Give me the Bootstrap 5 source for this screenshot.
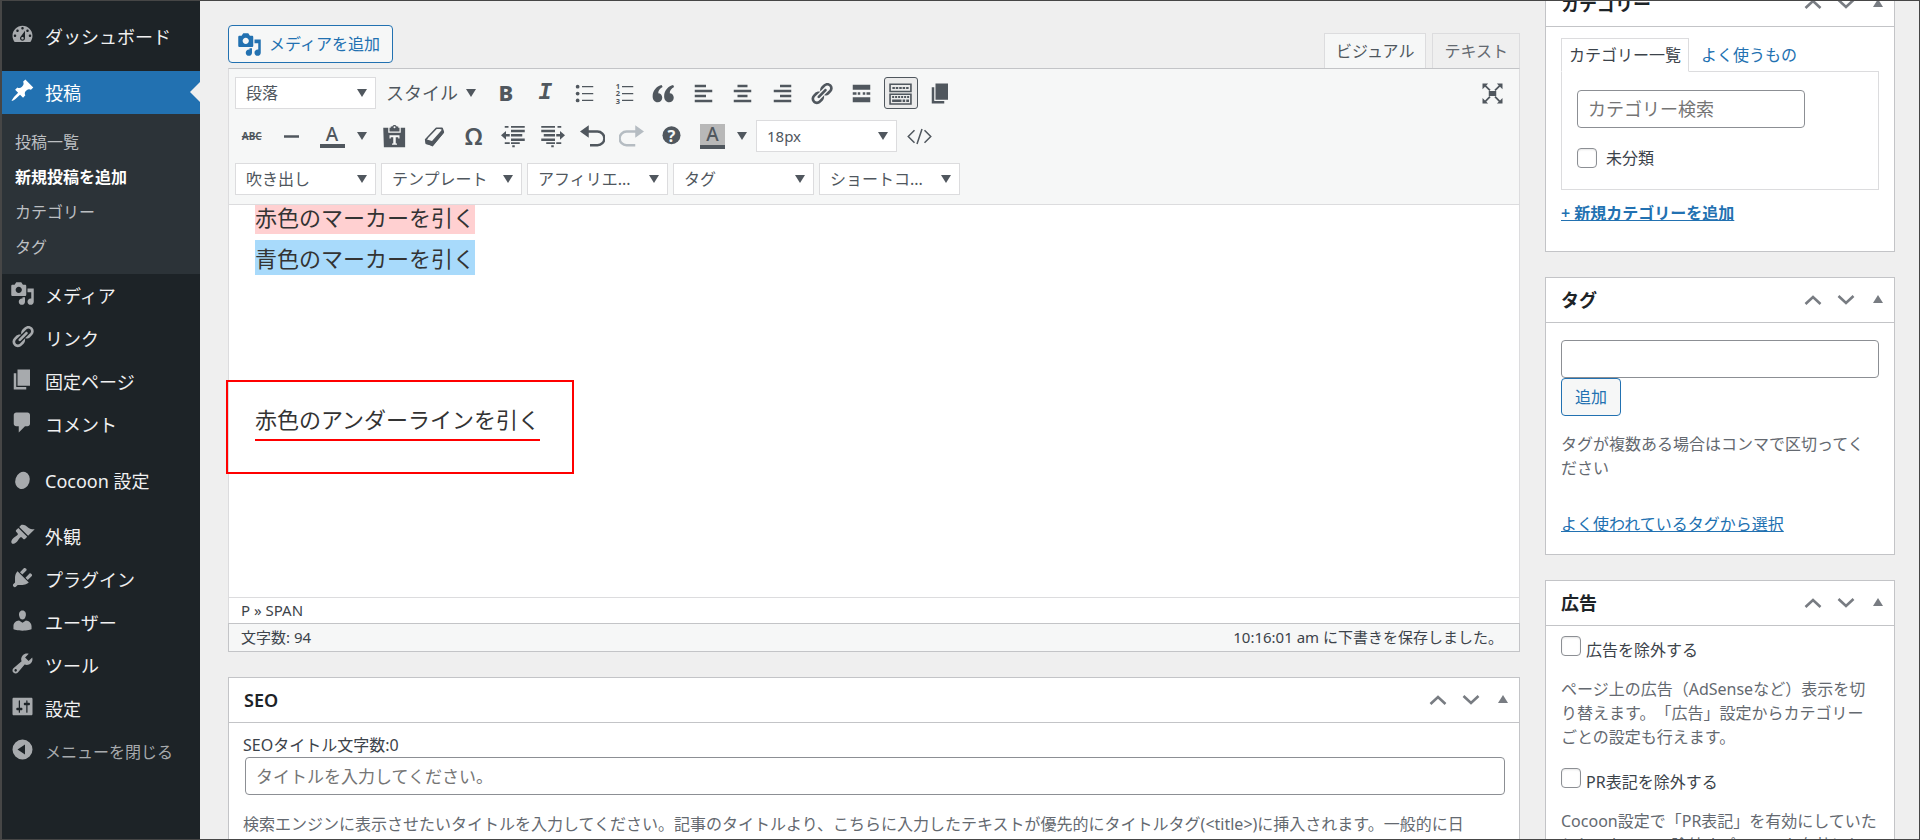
<!DOCTYPE html>
<html lang="ja">
<head>
<meta charset="utf-8">
<meta name="viewport" content="width=device-width, initial-scale=1">
<title>新規投稿を追加</title>
<link href="https://cdn.jsdelivr.net/npm/bootstrap@5.3.0/dist/css/bootstrap.min.css" rel="stylesheet">
<style>
:root{--ink:#3c434a;--muted:#646970;--blue:#2271b1;--line:#c3c4c7;--soft:#dcdcde;--pale:#f6f7f7;--icon:#50575e}
body{height:100vh;overflow:hidden;background:#efefef;color:var(--ink);font:16px/24px "Noto Sans","Noto Sans CJK JP",sans-serif;text-spacing-trim:space-all;border:solid #464646;border-width:1px 1px 1px 2px}
a{color:var(--blue)}
svg{display:block;fill:currentColor;flex:none}
button{color:inherit}

/* admin menu */
.side-menu{width:198px;background:#1d2327;color:#f0f0f1;font-size:18px;padding-top:14px}
.side-menu .entry{display:flex;align-items:center;gap:10px;height:43px;padding-left:8px;color:#f0f0f1;text-decoration:none;white-space:nowrap}
.side-menu .entry svg{width:25px;height:25px;margin-bottom:4px;color:#a7aaad}
.side-menu .gap-above{margin-top:13px}
.side-menu .entry.current{background:var(--blue);color:#fff;position:relative}
.side-menu .entry.current svg{color:#fff}
.side-menu .entry.current::after{content:"";position:absolute;right:0;top:11px;border:10px solid transparent;border-left:0;border-right-color:#efefef}
.sub-menu{background:#2c3338;font-size:16px;padding:10px 0 10px 13px}
.sub-menu a{display:flex;align-items:center;height:35px;color:#bcbfc2;text-decoration:none}
.sub-menu a.here{color:#fff;font-weight:600}
.side-menu .fold{background:none;border:0;color:#a7aaad;font-size:16px;width:100%}

/* editor */
.work{padding:0 24px 0 28px;gap:25px}
.btn-wp{border:1px solid var(--blue);border-radius:4px;background:var(--pale);color:var(--blue);font-size:16px;line-height:24px;height:38px;padding:0 13px}
.btn-media{gap:7px;padding:0 12px 0 8px;margin-bottom:5px}
.ed-tab{border:1px solid var(--soft);border-bottom:0;background:#efefef;color:var(--muted);height:35px;padding:0 11px;font-size:16px}
.ed-tab.on{background:var(--pale);color:var(--icon)}
.editor{border:1px solid var(--soft);border-top-color:var(--line);background:#fff}
.tools{background:var(--pale);border-bottom:1px solid var(--soft);padding:8px 6px 9px;color:var(--icon)}
.tools select{appearance:none;width:141px;height:32px;border:1px solid var(--soft);border-radius:0;background:#fff url("data:image/svg+xml,%3Csvg xmlns='http://www.w3.org/2000/svg' width='10' height='8'%3E%3Cpath d='M0 0h10L5 8z' fill='%2350575e'/%3E%3C/svg%3E") no-repeat right 8px center;color:var(--icon);font-size:16px;line-height:24px;padding:0 0 0 10px}
.tools select.short-label{font-size:15px}
.tools button{background:none;border:0;padding:0;display:flex;align-items:center;justify-content:center;height:32px}
.tools button svg{width:25px;height:25px}
.tools .styles{width:110px;gap:8px;font-size:18px}
.strip{display:grid;grid-auto-flow:column;grid-auto-columns:1fr;justify-items:center}
.strip button{width:34px}
.strip button.on{border:1px solid var(--icon);border-radius:3px;background:#ebebeb}
.caret{width:0;border:5px solid transparent;border-top:8px solid;border-bottom:0}
.w-pair{width:79px;margin-left:-3px}.w-eight{width:316px}.w-twelve{width:474px}
.swatch{font-size:19px;line-height:20px;width:25px;text-align:center;border-bottom:4px solid;font-weight:500}
.swatch.filled{background:#b8b8b8;line-height:21px}
.glyph-b{font-size:22px;font-weight:800;line-height:28px;padding-bottom:2px}
.glyph-i{font:italic 700 23px "Liberation Mono",monospace}
.glyph-abc{font-size:10px;font-weight:700;text-decoration:line-through}
.glyph-omega{font-size:24px;font-weight:600}
.canvas{height:392px;clip-path:inset(0 -8px);padding:0 26px;color:#333;font-size:22px;line-height:41px}
.canvas .lines{display:flow-root}
.canvas .first-line{margin-top:-8px}
.hl{padding:3px 0 2px}
.hl-red{background:#ffd0d1}.hl-blue{background:#a8dafb}
.ul-red{border-bottom:2px solid red;padding-bottom:5px}
.callout-line{margin-top:120px;position:relative}
.callout-line::after{content:"";position:absolute;left:-29px;top:-19px;width:348px;height:94px;border:2px solid red}
.path-row{border-top:1px solid var(--soft);height:26px;font-size:15px;line-height:25px;padding:0 12px}
.status-row{background:var(--pale);border:1px solid var(--line);margin:0 -1px -1px;font-size:15px;line-height:27px;padding:0 16px 0 12px}

/* panels */
.panel{background:#fff;border:1px solid var(--line)}
.panel-head{height:45px;border-bottom:1px solid var(--line);padding:0 11px 0 15px;color:#1d2327}
.panel-head h2{font-size:18px;line-height:24px;font-weight:600;margin:0}
.panel-head button{background:none;border:0;padding:0;color:#787c82}
.panel-head .move-down{margin:0 18px 0 15px}
.field{border:1px solid #8c8f94;border-radius:4px;height:38px;padding:0 10px;font-size:17px;background:#fff;color:var(--ink)}
.field::placeholder{color:#757575;opacity:1}
.hint{color:var(--muted);margin:0}
.tick{appearance:none;width:20px;height:20px;border:1px solid #8c8f94;border-radius:4px;background:#fff;box-shadow:inset 0 1px 2px rgba(0,0,0,.1);margin:0;flex:none}
.right-col{width:350px;margin-top:-20px;gap:25px}
.cat-tab{border:1px solid var(--soft);border-bottom-color:#fff;padding:0 7px;line-height:32px;margin-bottom:-1px;background:#fff}
.cat-box{border:1px solid var(--soft);padding:18px 15px 19px}
.cat-search{width:228px;font-size:18px}
.opt{gap:5px}
.opt span{padding-top:2px}
.opt + .hint{margin:15px 0 19px}
.seo-hint{padding:17px 32px 0 0}
</style>
</head>
<body class="d-flex">
<svg width="0" height="0" class="position-absolute" aria-hidden="true">
  <symbol id="media" viewBox="0 0 20 20"><path d="M13 11V4c0-.55-.45-1-1-1h-1.67L9 1H5L3.67 3H2c-.55 0-1 .45-1 1v7c0 .55.45 1 1 1h10c.55 0 1-.45 1-1zM7 4.5c1.38 0 2.5 1.12 2.5 2.5S8.38 9.5 7 9.5 4.5 8.38 4.5 7 5.62 4.5 7 4.5zM14 6h5v10.5c0 1.38-1.12 2.5-2.5 2.5S14 17.88 14 16.5s1.12-2.5 2.5-2.5c.17 0 .34.02.5.05V9h-3V6zm-4 8.05V13h2v3.5c0 1.38-1.12 2.5-2.5 2.5S7 17.88 7 16.5 8.12 14 9.5 14c.17 0 .34.02.5.05z"/></symbol>
  <symbol id="chain" viewBox="0 0 20 20"><path d="M17.74 2.76c1.68 1.69 1.68 4.41 0 6.1l-1.53 1.52c-1.12 1.12-2.7 1.47-4.14 1.09l2.62-2.61.76-.77.76-.76c.84-.84.84-2.2 0-3.04-.84-.85-2.2-.85-3.04 0l-.77.76-3.38 3.38c-.37-1.44-.02-3.02 1.1-4.14l1.52-1.53c1.69-1.68 4.42-1.68 6.1 0zM8.59 13.43l5.34-5.34c.42-.42.42-1.1 0-1.52-.44-.43-1.13-.39-1.53 0l-5.33 5.34c-.42.42-.42 1.1 0 1.52.44.43 1.13.39 1.52 0zm-.76 2.29l4.14-4.15c.38 1.44.03 3.02-1.09 4.14l-1.52 1.53c-1.69 1.68-4.41 1.68-6.1 0-1.68-1.68-1.68-4.42 0-6.1l1.53-1.52c1.12-1.12 2.7-1.47 4.14-1.1l-4.14 4.15c-.85.84-.85 2.2 0 3.05.84.84 2.2.84 3.04 0z"/></symbol>
  <symbol id="pages" viewBox="0 0 20 20"><path d="M6 15V2h10v13H6zm-1 1h8v2H3V5h2v11z"/></symbol>
  <symbol id="up" viewBox="0 0 18 12"><path d="M1.500 10 9 3l7.500 7" fill="none" stroke="currentColor" stroke-width="2.600"/></symbol>
  <symbol id="down" viewBox="0 0 18 12"><path d="M1.500 2 9 9l7.500-7" fill="none" stroke="currentColor" stroke-width="2.600"/></symbol>
  <symbol id="tri" viewBox="0 0 10 10"><path d="M0 8h10L5 0z"/></symbol>
</svg>

<nav class="side-menu flex-shrink-0" aria-label="管理メニュー">
  <a class="entry" href="#"><svg viewBox="0 0 20 20"><path d="M3.76 16h12.480c1.100-1.370 1.760-3.110 1.760-5 0-4.420-3.580-8-8-8s-8 3.580-8 8c0 1.890.66 3.630 1.760 5zM10 4c.55 0 1 .45 1 1s-.45 1-1 1-1-.45-1-1 .45-1 1-1zM6 6c.55 0 1 .45 1 1s-.45 1-1 1-1-.45-1-1 .45-1 1-1zm8 0c.55 0 1 .45 1 1s-.45 1-1 1-1-.45-1-1 .45-1 1-1zm-5.370 5.550L12 7v6c0 1.100-.9 2-2 2s-2-.9-2-2c0-.57.24-1.080.63-1.450zM4 10c.55 0 1 .45 1 1s-.45 1-1 1-1-.45-1-1 .45-1 1-1zm12 0c.55 0 1 .45 1 1s-.45 1-1 1-1-.45-1-1 .45-1 1-1zm-5 3c0-.55-.45-1-1-1s-1 .45-1 1 .45 1 1 1 1-.45 1-1z"/></svg>ダッシュボード</a>
  <a class="entry current gap-above" href="#"><svg viewBox="0 0 20 20"><path d="M10.440 3.020l1.820-1.820 6.360 6.350-1.830 1.820c-1.050-.68-2.480-.57-3.410.36l-.75.75c-.92.93-1.040 2.350-.35 3.410l-1.830 1.820-2.410-2.410-2.800 2.790c-.42.42-3.380 2.710-3.800 2.290s1.860-3.390 2.280-3.810l2.790-2.790L4.100 9.360l1.830-1.820c1.050.69 2.480.57 3.400-.36l.75-.75c.93-.92 1.050-2.350.36-3.410z"/></svg>投稿</a>
  <div class="sub-menu">
    <a href="#">投稿一覧</a><a href="#" class="here">新規投稿を追加</a><a href="#">カテゴリー</a><a href="#">タグ</a>
  </div>
  <a class="entry" href="#"><svg><use href="#media"/></svg>メディア</a>
  <a class="entry" href="#"><svg><use href="#chain"/></svg>リンク</a>
  <a class="entry" href="#"><svg><use href="#pages"/></svg>固定ページ</a>
  <a class="entry" href="#"><svg viewBox="0 0 20 20"><path d="M5 2h9c1.100 0 2 .9 2 2v7c0 1.100-.9 2-2 2h-2l-5 5v-5H5c-1.100 0-2-.9-2-2V4c0-1.100.9-2 2-2z"/></svg>コメント</a>
  <a class="entry gap-above" href="#"><svg viewBox="0 0 20 20"><ellipse cx="10" cy="11.500" rx="5.700" ry="7" transform="rotate(18 10 11.500)"/></svg>Cocoon 設定</a>
  <a class="entry gap-above" href="#"><svg viewBox="0 0 20 20"><path d="M14.480 11.060L7.410 3.990l1.500-1.500c.5-.56 2.300-.47 3.510.32 1.210.8 1.430 1.280 2.910 2.100 1.180.64 2.450 1.260 4.450.85zm-.71.71L6.700 4.700 4.930 6.470c-.39.39-.39 1.020 0 1.410l1.060 1.060c.39.39.39 1.030 0 1.420-.6.6-1.430 1.110-2.210 1.690-.35.26-.7.53-1.010.84C1.430 14.230.4 16.080 1.400 17.070c.99 1 2.840-.03 4.180-1.360.31-.31.58-.66.85-1.020.57-.78 1.080-1.610 1.690-2.210.39-.39 1.020-.39 1.410 0l1.060 1.060c.39.39 1.020.39 1.410 0z"/></svg>外観</a>
  <a class="entry" href="#"><svg viewBox="0 0 20 20"><path d="M13.110 4.360L9.870 7.600 8 5.730l3.240-3.240c.35-.34 1.050-.2 1.560.32.52.51.66 1.210.31 1.550zm-8 1.770l.91-1.120 9.010 9.010-1.190.84c-.71.71-2.630 1.160-3.820 1.160H6.140L4.900 17.260c-.59.59-1.540.59-2.120 0-.59-.58-.59-1.530 0-2.120l1.240-1.240v-3.880c0-1.130.4-3.190 1.090-3.890zm7.260 3.970l3.240-3.240c.34-.35 1.040-.21 1.550.31.52.51.66 1.210.31 1.550l-3.240 3.250z"/></svg>プラグイン</a>
  <a class="entry" href="#"><svg viewBox="0 0 20 20"><path d="M10 9.250c-2.270 0-2.730-3.440-2.730-3.440C7 4.020 7.820 2 9.970 2c2.160 0 2.980 2.020 2.710 3.810 0 0-.41 3.440-2.680 3.440zm0 2.570L12.720 10c2.390 0 4.520 2.330 4.520 4.530v2.490s-3.650 1.130-7.240 1.130c-3.650 0-7.240-1.130-7.240-1.130v-2.490c0-2.250 1.940-4.480 4.470-4.480z"/></svg>ユーザー</a>
  <a class="entry" href="#"><svg viewBox="0 0 20 20"><path d="M16.680 9.770c-1.340 1.340-3.300 1.670-4.950.99l-5.410 6.520c-.99.99-2.590.99-3.580 0s-.99-2.590 0-3.570l6.520-5.420c-.68-1.650-.35-3.610.99-4.950 1.280-1.280 3.120-1.620 4.720-1.060l-2.890 2.890 2.820 2.820 2.860-2.870c.53 1.580.18 3.390-1.080 4.650zM3.810 16.210c.4.39 1.040.39 1.430 0 .4-.4.4-1.040 0-1.430-.39-.4-1.030-.4-1.430 0-.39.39-.39 1.030 0 1.430z"/></svg>ツール</a>
  <a class="entry" href="#"><svg viewBox="0 0 20 20"><path d="M18 16V4c0-.55-.45-1-1-1H3c-.55 0-1 .45-1 1v12c0 .55.45 1 1 1h14c.55 0 1-.45 1-1zM8 11h1c.55 0 1 .45 1 1s-.45 1-1 1H8v1.500c0 .28-.22.5-.5.5s-.5-.22-.5-.5V13H6c-.55 0-1-.45-1-1s.45-1 1-1h1V5.500c0-.28.22-.5.5-.5s.5.22.5.5V11zm5-2h-1c-.55 0-1-.45-1-1s.45-1 1-1h1V5.500c0-.28.22-.5.5-.5s.5.22.5.5V7h1c.55 0 1 .45 1 1s-.45 1-1 1h-1v5.500c0 .28-.22.5-.5.5s-.5-.22-.5-.5V9z"/></svg>設定</a>
  <button class="entry fold" type="button"><svg viewBox="0 0 20 20"><path fill-rule="evenodd" d="M10 2a8 8 0 1 1 0 16 8 8 0 0 1 0-16zM6 10l6 4V6z"/></svg>メニューを閉じる</button>
</nav>

<main class="work d-flex flex-grow-1 align-items-start">
  <div class="flex-grow-1" style="min-width:0">
    <div class="d-flex justify-content-between align-items-end" style="height:67px">
      <button class="btn-wp btn-media d-flex align-items-center" type="button"><svg width="25" height="25"><use href="#media"/></svg>メディアを追加</button>
      <div class="d-flex" style="gap:6px"><button class="ed-tab on" type="button">ビジュアル</button><button class="ed-tab" type="button">テキスト</button></div>
    </div>

    <section class="editor" aria-label="エディター">
      <div class="tools d-flex flex-column" style="gap:11px">
        <div class="d-flex align-items-center">
          <select aria-label="段落"><option>段落</option></select>
          <button type="button" class="styles">スタイル<span class="caret"></span></button>
          <div class="strip w-twelve">
            <button type="button" aria-label="太字"><span class="glyph-b">B</span></button>
            <button type="button" aria-label="イタリック"><span class="glyph-i">I</span></button>
            <button type="button" aria-label="番号なしリスト"><svg viewBox="0 0 20 20"><circle cx="4.500" cy="4.500" r="1.500"/><circle cx="4.500" cy="10" r="1.500"/><circle cx="4.500" cy="15.500" r="1.500"/><path d="M8 4h9v1H8zM8 9.500h9v1H8zM8 15h9v1H8z"/></svg></button>
            <button type="button" aria-label="番号付きリスト"><svg viewBox="0 0 20 20"><path d="M8 4h9v1H8zM8 9.500h9v1H8zM8 15h9v1H8z"/><g font-size="6" font-weight="700"><text x="3" y="6.500">1</text><text x="3" y="12">2</text><text x="3" y="18">3</text></g></svg></button>
            <button type="button" aria-label="引用"><svg viewBox="0 0 20 20"><path d="M8.500 3.200C5 4 1.300 7.200 1.300 12.200c0 2.800 1.600 4.800 4 4.800 2.100 0 3.700-1.600 3.700-3.700S7.600 9.700 5.800 9.700c0-2 1.200-3.700 3.500-4.900zM17.700 3.200c-3.500.8-7.200 4-7.200 9 0 2.800 1.600 4.800 4 4.800 2.100 0 3.700-1.600 3.700-3.700s-1.400-3.600-3.200-3.600c0-2 1.200-3.700 3.500-4.900z"/></svg></button>
            <button type="button" aria-label="左寄せ"><svg viewBox="0 0 20 20"><path d="M3 3h9v2H3zM3 7h14v2H3zM3 11h9v2H3zM3 15h14v2H3z"/></svg></button>
            <button type="button" aria-label="中央揃え"><svg viewBox="0 0 20 20"><path d="M6 3h8v2H6zM3 7h14v2H3zM6 11h8v2H6zM3 15h14v2H3z"/></svg></button>
            <button type="button" aria-label="右寄せ"><svg viewBox="0 0 20 20"><path d="M8 3h9v2H8zM3 7h14v2H3zM8 11h9v2H8zM3 15h14v2H3z"/></svg></button>
            <button type="button" aria-label="リンク"><svg><use href="#chain"/></svg></button>
            <button type="button" aria-label="続きを読む"><svg viewBox="0 0 20 20"><path d="M3 3h14v4H3zM3 9h3v2H3zM7 9h2v2H7zM11 9h2v2h-2zM14 9h3v2h-3zM3 13h14v4H3z"/></svg></button>
            <button class="on" type="button" aria-label="ツールバー切り替え"><svg viewBox="0 0 20 20"><path fill-rule="evenodd" d="M1 2h18v7H1zM2.300 3.200v4.600h15.400V3.200zM1 10h18v9H1zM2.300 11.200v6.600h15.400v-6.600z"/><path d="M3.500 4.700h2v1.700h-2zM6.200 4.700h2v1.700h-2zM9 4.700h2v1.700H9zM11.700 4.700h2v1.700h-2zM14.500 4.700h2v1.700h-2zM3.300 12h1.600v1.500H3.300zM5.700 12h1.600v1.500H5.700zM8.100 12h1.600v1.500H8.100zM10.500 12h1.600v1.500h-1.600zM12.900 12h1.600v1.500h-1.600zM15.300 12h1.600v1.500h-1.600zM3.300 14.800h7.500v2H3.300zM11.700 14.800h2v2h-2zM14.600 14.800h2.200v2h-2.200z"/></svg></button>
            <button type="button" aria-label="ページ"><svg><use href="#pages"/></svg></button>
          </div>
          <button class="ms-auto me-2" type="button" aria-label="集中執筆モード"><svg viewBox="0 0 20 20"><path d="M7 8h6v4H7zM2 2h4.500L5 3.500 8.500 7l-1 1L4 4.500 2 6.500zM18 2h-4.500L15 3.500 11.500 7l1 1L16 4.500l2 2zM2 18h4.500L5 16.500 8.500 13l-1-1L4 15.500l-2-2zM18 18h-4.500l1.500-1.500-3.500-3.500 1-1 3.500 3.500 2-2z"/></svg></button>
        </div>
        <div class="d-flex align-items-center">
          <div class="strip w-pair">
            <button type="button" aria-label="打ち消し"><span class="glyph-abc">ABC</span></button>
            <button type="button" aria-label="横ライン"><svg viewBox="0 0 20 20"><path d="M4 9h12v2H4z"/></svg></button>
          </div>
          <button type="button" aria-label="テキスト色" style="width:64px;gap:12px"><span class="swatch">A</span><span class="caret"></span></button>
          <div class="strip w-eight">
            <button type="button" aria-label="テキストとしてペースト"><svg viewBox="0 0 20 20"><path fill-rule="evenodd" d="M7 2h1.200c.2-.8 1-1.300 1.800-1.300s1.600.5 1.800 1.300H13v1h1v3H6V3h1zM10 1.800a.8.800 0 1 0 0 1.600.8.800 0 0 0 0-1.600zM1 3h4v4h10V3h3.500v15.500H1.500zM6 9v2.500h1V10.500h2v5H8v1h4v-1h-1v-5h2v1h1V9z"/></svg></button>
            <button type="button" aria-label="書式設定をクリア"><svg viewBox="0 0 20 20"><path fill="none" stroke="currentColor" stroke-width="1.400" stroke-linejoin="round" d="M3 12.500 11.500 3.500 16 3.500 17 6.500 8.500 16.500 3.500 15.500z"/><path d="m2.500 12 5.500 1.500 8.500-9.500 1 3-9 11-5.500-2.500z"/><path d="m4.500 11.500 7.500-7.500h3l-7.500 8.500z" fill="#f6f7f7"/></svg></button>
            <button type="button" aria-label="特殊文字"><span class="glyph-omega">Ω</span></button>
            <button type="button" aria-label="インデントを減らす"><svg viewBox="0 0 20 20"><path d="M3 1.500h3V3H3zM8 1.500h11V3H8zM8 4.500h11v2H8zM8 8h9v2H8zM8 11.500h11v2H8zM3 14.500h4V16H3zM8 14.500h7V16H8zM9 17h2v1.500H9zM7 8v2H4v2.500L0 9l4-3.500V8z"/></svg></button>
            <button type="button" aria-label="インデントを増やす"><svg viewBox="0 0 20 20"><path d="M1 1.500h11V3H1zM14 1.500h3V3h-3zM1 4.500h11v2H1zM3 8h9v2H3zM1 11.500h11v2H1zM5 14.500h7V16H5zM13 14.500h4V16h-4zM9 17h2v1.500H9zM13 8v2h3v2.500L20 9l-4-3.500V8z"/></svg></button>
            <button type="button" aria-label="取り消し"><svg viewBox="0 0 20 20"><path d="M0 6l7-5v4h7a5.500 5.500 0 0 1 0 13H8v-2h6a3.700 3.700 0 0 0 0-9H7v4z"/></svg></button>
            <button type="button" aria-label="やり直し" style="color:#b5bcc2"><svg viewBox="0 0 20 20"><path d="M20 6l-7-5v4H6a5.500 5.500 0 0 0 0 13h7v-2H6a3.700 3.700 0 0 1 0-9h7v4z"/></svg></button>
            <button type="button" aria-label="ヘルプ"><svg viewBox="0 0 20 20"><circle cx="10" cy="9" r="7.200"/><text x="10" y="14" font-size="13" font-weight="700" text-anchor="middle" fill="#f6f7f7">?</text></svg></button>
          </div>
          <button type="button" aria-label="背景色" style="width:65px;gap:12px"><span class="swatch filled">A</span><span class="caret"></span></button>
          <select class="short-label" aria-label="フォントサイズ"><option>18px</option></select>
          <button type="button" aria-label="ソースコード" style="width:44px"><svg viewBox="0 0 20 20"><path d="M6 5 1 10l5 5M14 5l5 5-5 5M12 4 8 16" fill="none" stroke="currentColor" stroke-width="1.200"/></svg></button>
        </div>
        <div class="d-flex" style="gap:5px">
          <select aria-label="吹き出し"><option>吹き出し</option></select>
          <select aria-label="テンプレート"><option>テンプレート</option></select>
          <select aria-label="アフィリエイト"><option>アフィリエ...</option></select>
          <select aria-label="タグ"><option>タグ</option></select>
          <select aria-label="ショートコード"><option>ショートコ...</option></select>
        </div>
      </div>
      <div class="canvas"><div class="lines">
        <div class="first-line"><span class="hl hl-red">赤色のマーカーを引く</span></div>
        <div><span class="hl hl-blue">青色のマーカーを引く</span></div>
        <div class="callout-line"><span class="ul-red">赤色のアンダーラインを引く</span></div>
      </div></div>
      <div class="path-row">P » SPAN</div>
      <div class="status-row d-flex justify-content-between"><span>文字数: 94</span><span>10:16:01 am に下書きを保存しました。</span></div>
    </section>

    <section class="panel" style="margin-top:25px">
      <div class="panel-head d-flex align-items-center">
        <h2 class="me-auto">SEO</h2>
        <button type="button" aria-label="上に移動"><svg width="18" height="12"><use href="#up"/></svg></button>
        <button type="button" class="move-down" aria-label="下に移動"><svg width="18" height="12"><use href="#down"/></svg></button>
        <button type="button" aria-label="パネルを閉じる"><svg width="10" height="10"><use href="#tri"/></svg></button>
      </div>
      <div style="padding:10px 14px">
        <label class="d-block" for="seo">SEOタイトル文字数:0</label>
        <div style="padding-left:2px"><input id="seo" class="field w-100" placeholder="タイトルを入力してください。"></div>
        <p class="hint seo-hint">検索エンジンに表示させたいタイトルを入力してください。記事のタイトルより、こちらに入力したテキストが優先的にタイトルタグ(&lt;title&gt;)に挿入されます。一般的に日本語の場合は、32文字以内が最適とされています。</p>
      </div>
    </section>
  </div>

  <aside class="right-col d-flex flex-column flex-shrink-0">
    <section class="panel">
      <div class="panel-head d-flex align-items-center">
        <h2 class="me-auto">カテゴリー</h2>
        <button type="button" aria-label="上に移動"><svg width="18" height="12"><use href="#up"/></svg></button>
        <button type="button" class="move-down" aria-label="下に移動"><svg width="18" height="12"><use href="#down"/></svg></button>
        <button type="button" aria-label="パネルを閉じる"><svg width="10" height="10"><use href="#tri"/></svg></button>
      </div>
      <div style="padding:11px 15px 26px">
        <div class="d-flex align-items-center"><span class="cat-tab">カテゴリー一覧</span><a href="#" class="text-decoration-none" style="margin-left:12px">よく使うもの</a></div>
        <div class="cat-box">
          <input class="field cat-search" placeholder="カテゴリー検索" aria-label="カテゴリー検索">
          <label class="d-flex align-items-center" style="gap:9px;margin-top:18px"><input class="tick" type="checkbox">未分類</label>
        </div>
        <a href="#" class="d-inline-block" style="margin-top:11px;font-weight:600">+ 新規カテゴリーを追加</a>
      </div>
    </section>

    <section class="panel">
      <div class="panel-head d-flex align-items-center">
        <h2 class="me-auto">タグ</h2>
        <button type="button" aria-label="上に移動"><svg width="18" height="12"><use href="#up"/></svg></button>
        <button type="button" class="move-down" aria-label="下に移動"><svg width="18" height="12"><use href="#down"/></svg></button>
        <button type="button" aria-label="パネルを閉じる"><svg width="10" height="10"><use href="#tri"/></svg></button>
      </div>
      <div style="padding:17px 15px 18px">
        <input class="field w-100 d-block" aria-label="タグを追加">
        <button class="btn-wp" type="button">追加</button>
        <p class="hint" style="margin:16px 0 32px">タグが複数ある場合はコンマで区切ってください</p>
        <a href="#">よく使われているタグから選択</a>
      </div>
    </section>

    <section class="panel">
      <div class="panel-head d-flex align-items-center">
        <h2 class="me-auto">広告</h2>
        <button type="button" aria-label="上に移動"><svg width="18" height="12"><use href="#up"/></svg></button>
        <button type="button" class="move-down" aria-label="下に移動"><svg width="18" height="12"><use href="#down"/></svg></button>
        <button type="button" aria-label="パネルを閉じる"><svg width="10" height="10"><use href="#tri"/></svg></button>
      </div>
      <div style="padding:10px 15px">
        <label class="opt d-flex"><input class="tick" type="checkbox"><span>広告を除外する</span></label>
        <p class="hint">ページ上の広告（AdSenseなど）表示を切り替えます。「広告」設定からカテゴリーごとの設定も行えます。</p>
        <label class="opt d-flex"><input class="tick" type="checkbox"><span>PR表記を除外する</span></label>
        <p class="hint">Cocoon設定で「PR表記」を有効にしていたとしても、この除外オプションを有効にしたページでは表示されません。</p>
      </div>
    </section>
  </aside>
</main>
<script src="https://cdn.jsdelivr.net/npm/bootstrap@5.3.0/dist/js/bootstrap.bundle.min.js"></script>
</body>
</html>
